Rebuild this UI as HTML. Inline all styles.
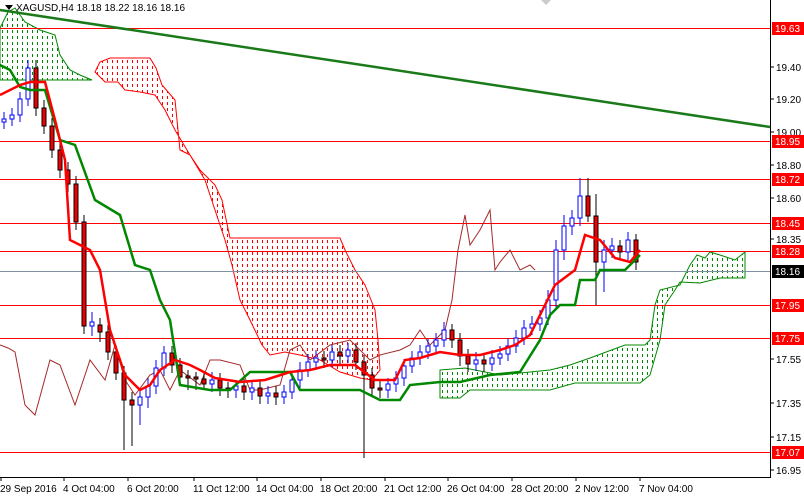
<!DOCTYPE html>
<html><head><meta charset="utf-8"><style>
html,body{margin:0;padding:0;background:#fff;width:804px;height:496px;overflow:hidden}
svg{display:block;font-family:"Liberation Sans",sans-serif}
.u{fill:#fff;stroke:#00f;stroke-width:1}
.d{fill:#e00;stroke:#000;stroke-width:1}
</style></head><body>
<svg width="804" height="496" xmlns="http://www.w3.org/2000/svg">
<defs>
<pattern id="pr" width="5" height="6" patternUnits="userSpaceOnUse"><rect x="2" y="0" width="1" height="3" fill="#f00"/></pattern>
<pattern id="pg" width="5" height="6" patternUnits="userSpaceOnUse"><rect x="2" y="0" width="1" height="3" fill="#080"/></pattern>
</defs>
<rect width="804" height="496" fill="#fff"/>
<polygon fill="url(#pg)" stroke="#080" stroke-width="1" points="0,28 8,12 15,8 25,22 40,30 55,35 60,55 70,70 80,75 92,80 60,80 30,80 0,80"/>
<polygon fill="url(#pr)" stroke="#f00" stroke-width="1" points="95,72 100,62 110,58 150,58 156,68 162,85 175,100 180,150 190,155 200,170 215,185 222,200 230,238 260,238 340,238 345,250 355,270 365,285 375,310 378,340 380,370 372,380 360,378 340,372 320,360 300,355 285,352 270,355 262,345 250,320 240,300 232,265 225,240 215,210 205,180 190,155 175,130 165,110 155,95 140,92 125,90 118,82 105,82"/>
<polygon fill="url(#pg)" stroke="#080" stroke-width="1" points="440,370 465,368 500,375 520,373 550,370 570,365 590,358 625,345 645,345 650,340 655,305 660,290 680,285 690,265 697,255 705,258 710,252 720,255 735,260 745,252 745,278 720,278 700,283 680,282 675,290 665,305 660,340 650,375 640,383 575,383 550,390 510,390 470,390 460,398 440,398"/>
<g stroke="#f00" stroke-width="1">
<line x1="0" y1="28.5" x2="770" y2="28.5"/><line x1="0" y1="141.5" x2="770" y2="141.5"/>
<line x1="0" y1="179.5" x2="770" y2="179.5"/><line x1="0" y1="223.5" x2="770" y2="223.5"/>
<line x1="0" y1="251.5" x2="770" y2="251.5"/><line x1="0" y1="305.5" x2="770" y2="305.5"/>
<line x1="0" y1="338.5" x2="770" y2="338.5"/><line x1="0" y1="452.5" x2="770" y2="452.5"/>
</g>
<line x1="0" y1="271.5" x2="770" y2="271.5" stroke="#8090a0"/>
<line x1="0" y1="10" x2="770" y2="127" stroke="#1a7a1a" stroke-width="2.5"/>
<polyline fill="none" stroke="#a52a2a" stroke-width="1" points="0,345 8,348 15,352 25,405 35,415 50,360 60,365 75,405 90,360 105,380 115,345 125,380 135,395 150,375 160,370 170,390 180,370 200,385 210,360 220,360 240,365 250,390 260,390 280,385 290,350 300,345 310,360 330,345 350,340 370,360 380,355 400,350 410,345 420,330 430,345 445,330 452,300 458,250 465,215 470,245 480,230 490,210 495,270 500,262 510,250 520,270 530,265 535,270"/>
<!-- wicks -->
<path fill="none" stroke="#00f" stroke-width="1" d="M4 112V129M12 108V126M20 92V122M28 60V106M92 312V336M140 390V425M148 378V408M156 360V394M164 346V376M212 372V392M236 380V398M252 381V400M268 386V404M284 385V404M292 372V399M300 362V388M308 354V377M316 350V370M332 345V367M348 343V363M388 378V398M396 371V392M404 359V386M412 351V373M420 345V365M428 339V359M436 333V353M444 322V347M476 352V371M492 350V371M500 346V365M508 338V361M516 330V353M524 320V345M532 316V335M540 310V331M548 290V325M556 240V310M564 215V260M572 210V235M580 178V226M604 240V292M612 238V258M628 232V260"/>
<path fill="none" stroke="#000" stroke-width="1" d="M36 60V116M44 100V134M52 118V158M60 142V178M68 162V192M76 176V230M84 215V334M100 318V342M108 325V360M116 345V380M124 366V450M132 392V446M172 346V373M180 358V385M188 370V390M196 372V390M204 372V390M220 373V396M228 382V398M244 379V400M260 381V404M276 386V405M324 351V368M340 345V364M356 343V370M364 355V458M372 368V396M380 380V398M452 324V348M460 333V366M468 349V372M484 353V372M588 178V222M596 194V305M620 240V259M636 234V270"/>
<!-- bodies -->
<rect class="u" x="2" y="119" width="4" height="3"/>
<rect class="u" x="10" y="115" width="4" height="4"/>
<rect class="u" x="18" y="99" width="4" height="16"/>
<rect class="u" x="26" y="68" width="4" height="31"/>
<rect class="d" x="34" y="68" width="4" height="40"/>
<rect class="d" x="42" y="108" width="4" height="18"/>
<rect class="d" x="50" y="126" width="4" height="24"/>
<rect class="d" x="58" y="150" width="4" height="20"/>
<rect class="d" x="66" y="170" width="4" height="14"/>
<rect class="d" x="74" y="184" width="4" height="38"/>
<rect class="d" x="82" y="222" width="4" height="104"/>
<rect class="u" x="90" y="322" width="4" height="4"/>
<rect class="d" x="98" y="325" width="4" height="7"/>
<rect class="d" x="106" y="332" width="4" height="20"/>
<rect class="d" x="114" y="352" width="4" height="21"/>
<rect class="d" x="122" y="373" width="4" height="27"/>
<rect class="d" x="130" y="400" width="4" height="5"/>
<rect class="u" x="138" y="397" width="4" height="8"/>
<rect class="u" x="146" y="386" width="4" height="11"/>
<rect class="u" x="154" y="368" width="4" height="18"/>
<rect class="u" x="162" y="353" width="4" height="15"/>
<rect class="d" x="170" y="353" width="4" height="12"/>
<rect class="d" x="178" y="365" width="4" height="12"/>
<rect class="d" x="186" y="376" width="4" height="2"/>
<rect class="d" x="194" y="377" width="4" height="2"/>
<rect class="d" x="202" y="379" width="4" height="5"/>
<rect class="u" x="210" y="380" width="4" height="4"/>
<rect class="d" x="218" y="380" width="4" height="8"/>
<rect class="d" x="226" y="388" width="4" height="2"/>
<rect class="u" x="234" y="386" width="4" height="4"/>
<rect class="d" x="242" y="386" width="4" height="6"/>
<rect class="u" x="250" y="388" width="4" height="4"/>
<rect class="d" x="258" y="388" width="4" height="8"/>
<rect class="u" x="266" y="393" width="4" height="3"/>
<rect class="d" x="274" y="393" width="4" height="4"/>
<rect class="u" x="282" y="392" width="4" height="5"/>
<rect class="u" x="290" y="380" width="4" height="12"/>
<rect class="u" x="298" y="370" width="4" height="10"/>
<rect class="u" x="306" y="362" width="4" height="8"/>
<rect class="u" x="314" y="358" width="4" height="4"/>
<rect class="d" x="322" y="358" width="4" height="2"/>
<rect class="u" x="330" y="352" width="4" height="8"/>
<rect class="d" x="338" y="352" width="4" height="4"/>
<rect class="u" x="346" y="350" width="4" height="6"/>
<rect class="d" x="354" y="350" width="4" height="12"/>
<rect class="d" x="362" y="362" width="4" height="13"/>
<rect class="d" x="370" y="375" width="4" height="13"/>
<rect class="d" x="378" y="388" width="4" height="2"/>
<rect class="u" x="386" y="384" width="4" height="6"/>
<rect class="u" x="394" y="378" width="4" height="6"/>
<rect class="u" x="402" y="366" width="4" height="12"/>
<rect class="u" x="410" y="358" width="4" height="8"/>
<rect class="u" x="418" y="352" width="4" height="6"/>
<rect class="u" x="426" y="346" width="4" height="6"/>
<rect class="u" x="434" y="340" width="4" height="6"/>
<rect class="u" x="442" y="330" width="4" height="10"/>
<rect class="d" x="450" y="330" width="4" height="10"/>
<rect class="d" x="458" y="340" width="4" height="16"/>
<rect class="d" x="466" y="356" width="4" height="8"/>
<rect class="u" x="474" y="360" width="4" height="4"/>
<rect class="d" x="482" y="360" width="4" height="4"/>
<rect class="u" x="490" y="358" width="4" height="6"/>
<rect class="u" x="498" y="354" width="4" height="4"/>
<rect class="u" x="506" y="346" width="4" height="8"/>
<rect class="u" x="514" y="338" width="4" height="8"/>
<rect class="u" x="522" y="328" width="4" height="10"/>
<rect class="u" x="530" y="324" width="4" height="4"/>
<rect class="u" x="538" y="318" width="4" height="6"/>
<rect class="u" x="546" y="300" width="4" height="18"/>
<rect class="u" x="554" y="250" width="4" height="50"/>
<rect class="u" x="562" y="226" width="4" height="24"/>
<rect class="u" x="570" y="218" width="4" height="8"/>
<rect class="u" x="578" y="196" width="4" height="22"/>
<rect class="d" x="586" y="196" width="4" height="20"/>
<rect class="d" x="594" y="216" width="4" height="46"/>
<rect class="u" x="602" y="250" width="4" height="12"/>
<rect class="u" x="610" y="246" width="4" height="4"/>
<rect class="d" x="618" y="246" width="4" height="6"/>
<rect class="u" x="626" y="240" width="4" height="12"/>
<rect class="d" x="634" y="240" width="4" height="22"/>
<polyline fill="none" stroke="#080" stroke-width="2.5" points="0,65 10,70 20,87 30,90 45,90 60,140 75,145 95,200 120,215 135,265 150,270 160,300 170,320 180,385 210,390 230,390 250,372 290,372 300,390 360,390 380,400 400,400 410,385 440,382 460,382 490,375 520,372 540,340 550,315 560,305 575,305 580,280 595,280 600,270 625,270 640,255"/>
<polyline fill="none" stroke="#f00" stroke-width="2.5" points="0,95 20,85 30,82 45,82 55,120 65,160 70,240 90,250 100,270 110,330 125,375 140,390 150,385 160,370 175,360 190,365 200,370 215,378 240,382 265,380 290,372 310,370 330,365 355,365 375,380 395,380 405,360 420,358 440,352 460,355 480,355 500,350 515,345 530,335 545,305 555,285 575,270 585,235 600,240 615,258 630,262 640,250"/>
<line x1="770.5" y1="0" x2="770.5" y2="477" stroke="#000"/>
<line x1="0" y1="477.5" x2="771" y2="477.5" stroke="#000"/>
<g font-size="10" fill="#000">
<text x="776" y="71">19.40</text><text x="776" y="103">19.20</text><text x="776" y="136">19.00</text>
<text x="776" y="169">18.80</text><text x="776" y="202">18.60</text><text x="776" y="243">18.35</text>
<text x="776" y="363">17.55</text><text x="776" y="407">17.35</text><text x="776" y="441">17.15</text><text x="776" y="474">16.95</text>
</g>
<g stroke="#000"><line x1="770" y1="67" x2="774" y2="67"/><line x1="770" y1="99" x2="774" y2="99"/><line x1="770" y1="132" x2="774" y2="132"/><line x1="770" y1="165" x2="774" y2="165"/><line x1="770" y1="198" x2="774" y2="198"/><line x1="770" y1="239" x2="774" y2="239"/><line x1="770" y1="359" x2="774" y2="359"/><line x1="770" y1="403" x2="774" y2="403"/><line x1="770" y1="437" x2="774" y2="437"/><line x1="770" y1="470" x2="774" y2="470"/></g>
<g font-size="10" fill="#fff">
<rect x="772" y="22" width="32" height="13" fill="#f00"/><text x="775" y="32">19.63</text>
<rect x="772" y="135" width="32" height="13" fill="#f00"/><text x="775" y="145">18.95</text>
<rect x="772" y="173" width="32" height="13" fill="#f00"/><text x="775" y="183">18.72</text>
<rect x="772" y="217" width="32" height="13" fill="#f00"/><text x="775" y="227">18.45</text>
<rect x="772" y="245" width="32" height="13" fill="#f00"/><text x="775" y="255">18.28</text>
<rect x="772" y="265" width="32" height="13" fill="#000"/><text x="775" y="275">18.16</text>
<rect x="772" y="299" width="32" height="13" fill="#f00"/><text x="775" y="309">17.95</text>
<rect x="772" y="332" width="32" height="13" fill="#f00"/><text x="775" y="342">17.75</text>
<rect x="772" y="446" width="32" height="13" fill="#f00"/><text x="775" y="456">17.07</text>
</g>
<g font-size="10" fill="#000">
<text x="0" y="492">29 Sep 2016</text><text x="63" y="492">4 Oct 04:00</text><text x="127" y="492">6 Oct 20:00</text>
<text x="193" y="492">11 Oct 12:00</text><text x="256" y="492">14 Oct 04:00</text><text x="320" y="492">18 Oct 20:00</text>
<text x="384" y="492">21 Oct 12:00</text><text x="447" y="492">26 Oct 04:00</text><text x="511" y="492">28 Oct 20:00</text>
<text x="575" y="492">2 Nov 12:00</text><text x="639" y="492">7 Nov 04:00</text>
</g>
<g stroke="#000"><line x1="1" y1="477" x2="1" y2="481"/><line x1="64" y1="477" x2="64" y2="481"/><line x1="128" y1="477" x2="128" y2="481"/><line x1="194" y1="477" x2="194" y2="481"/><line x1="257" y1="477" x2="257" y2="481"/><line x1="321" y1="477" x2="321" y2="481"/><line x1="385" y1="477" x2="385" y2="481"/><line x1="448" y1="477" x2="448" y2="481"/><line x1="512" y1="477" x2="512" y2="481"/><line x1="576" y1="477" x2="576" y2="481"/><line x1="640" y1="477" x2="640" y2="481"/></g>
<polygon points="5,5 13,5 9,10" fill="#000"/>
<text x="16" y="11" font-size="10" fill="#000">XAGUSD,H4  18.18 18.22 18.16 18.16</text>
<polygon points="541,0 551,0 546,5" fill="#ccc"/>
</svg>
</body></html>
